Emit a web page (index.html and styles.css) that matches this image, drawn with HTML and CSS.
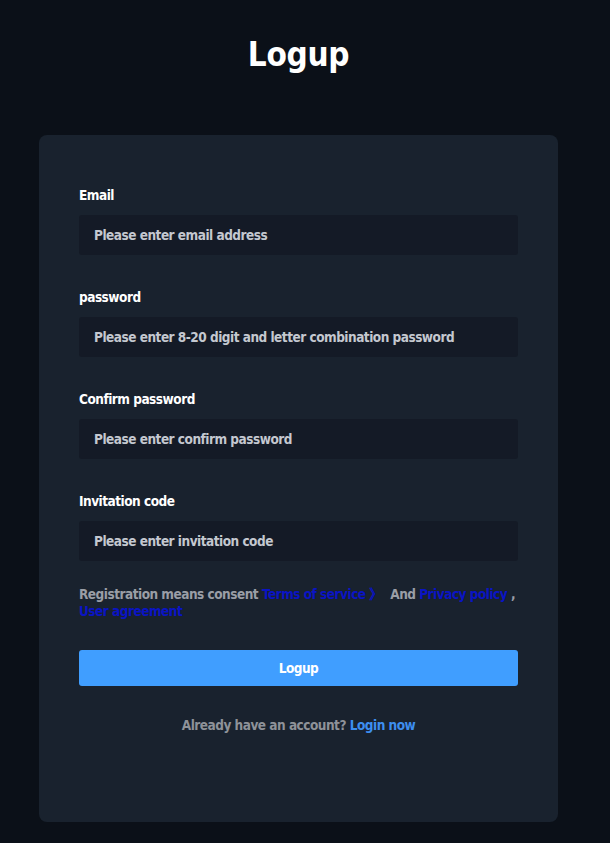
FILE: index.html
```html
<!DOCTYPE html>
<html lang="en">
<head>
<meta charset="utf-8">
<title>Logup</title>
<link rel="stylesheet" href="styles.css">
</head>
<body>
<main class="page">
  <h1 class="title">Logup</h1>
  <section class="card">
    <form class="form">
      <div class="field">
        <label class="label">Email</label>
        <div class="input">Please enter email address</div>
      </div>
      <div class="field">
        <label class="label">password</label>
        <div class="input">Please enter 8-20 digit and letter combination password</div>
      </div>
      <div class="field">
        <label class="label">Confirm password</label>
        <div class="input">Please enter confirm password</div>
      </div>
      <div class="field">
        <label class="label">Invitation code</label>
        <div class="input">Please enter invitation code</div>
      </div>
      <p class="terms">Registration means consent <a class="link">Terms of service 》</a>&nbsp; And <a class="link">Privacy policy</a> , <a class="link">User agreement</a></p>
      <button type="button" class="btn">Logup</button>
      <p class="login">Already have an account? <a class="login-link">Login now</a></p>
    </form>
  </section>
</main>
</body>
</html>
```

FILE: styles.css
```css
* { box-sizing: border-box; }
html, body { margin: 0; padding: 0; }
body {
  background: #0b1018;
  font-family: "DejaVu Sans Condensed", "DejaVu Sans", sans-serif;
  font-weight: bold;
  color: #fff;
  min-height: 843px;
}
.page {
  width: 597px;
  display: flex;
  flex-direction: column;
  align-items: center;
  padding-top: 32px;
}
.title {
  margin: 0;
  font-size: 33px;
  line-height: 46px;
  height: 46px;
  font-weight: bold;
  letter-spacing: -0.3px;
  color: #fff;
}
.card {
  margin-top: 57px;
  width: 519px;
  height: 687px;
  background: #19222e;
  border-radius: 8px;
  padding: 50px 40px 0 40px;
}
.form { display: flex; flex-direction: column; }
.field { display: flex; flex-direction: column; margin-bottom: 32px; }
.label {
  font-size: 13.5px;
  letter-spacing: -0.5px;
  line-height: 20px;
  color: #fff;
  margin-bottom: 10px;
}
.input {
  height: 40px;
  background: #141a26;
  border-radius: 3px;
  padding: 0 15px;
  font-size: 13.5px;
  letter-spacing: -0.5px;
  line-height: 40px;
  color: #c4c8d0;
  white-space: nowrap;
}
.terms {
  margin: -7px 0 0 0;
  font-size: 13.5px;
  letter-spacing: -0.5px;
  line-height: 17px;
  color: #9a9ea6;
}
.link { color: #0a14c4; }
.btn {
  margin-top: 30px;
  height: 36px;
  border: none;
  border-radius: 3px;
  background: #409eff;
  color: #fff;
  font-family: inherit;
  font-weight: bold;
  font-size: 13.5px;
  letter-spacing: -0.5px;
}
.login {
  margin: 30px 0 0 0;
  text-align: center;
  font-size: 13.5px;
  letter-spacing: -0.5px;
  line-height: 18px;
  color: #8e9299;
}
.login-link { color: #3d8ef0; }
```
